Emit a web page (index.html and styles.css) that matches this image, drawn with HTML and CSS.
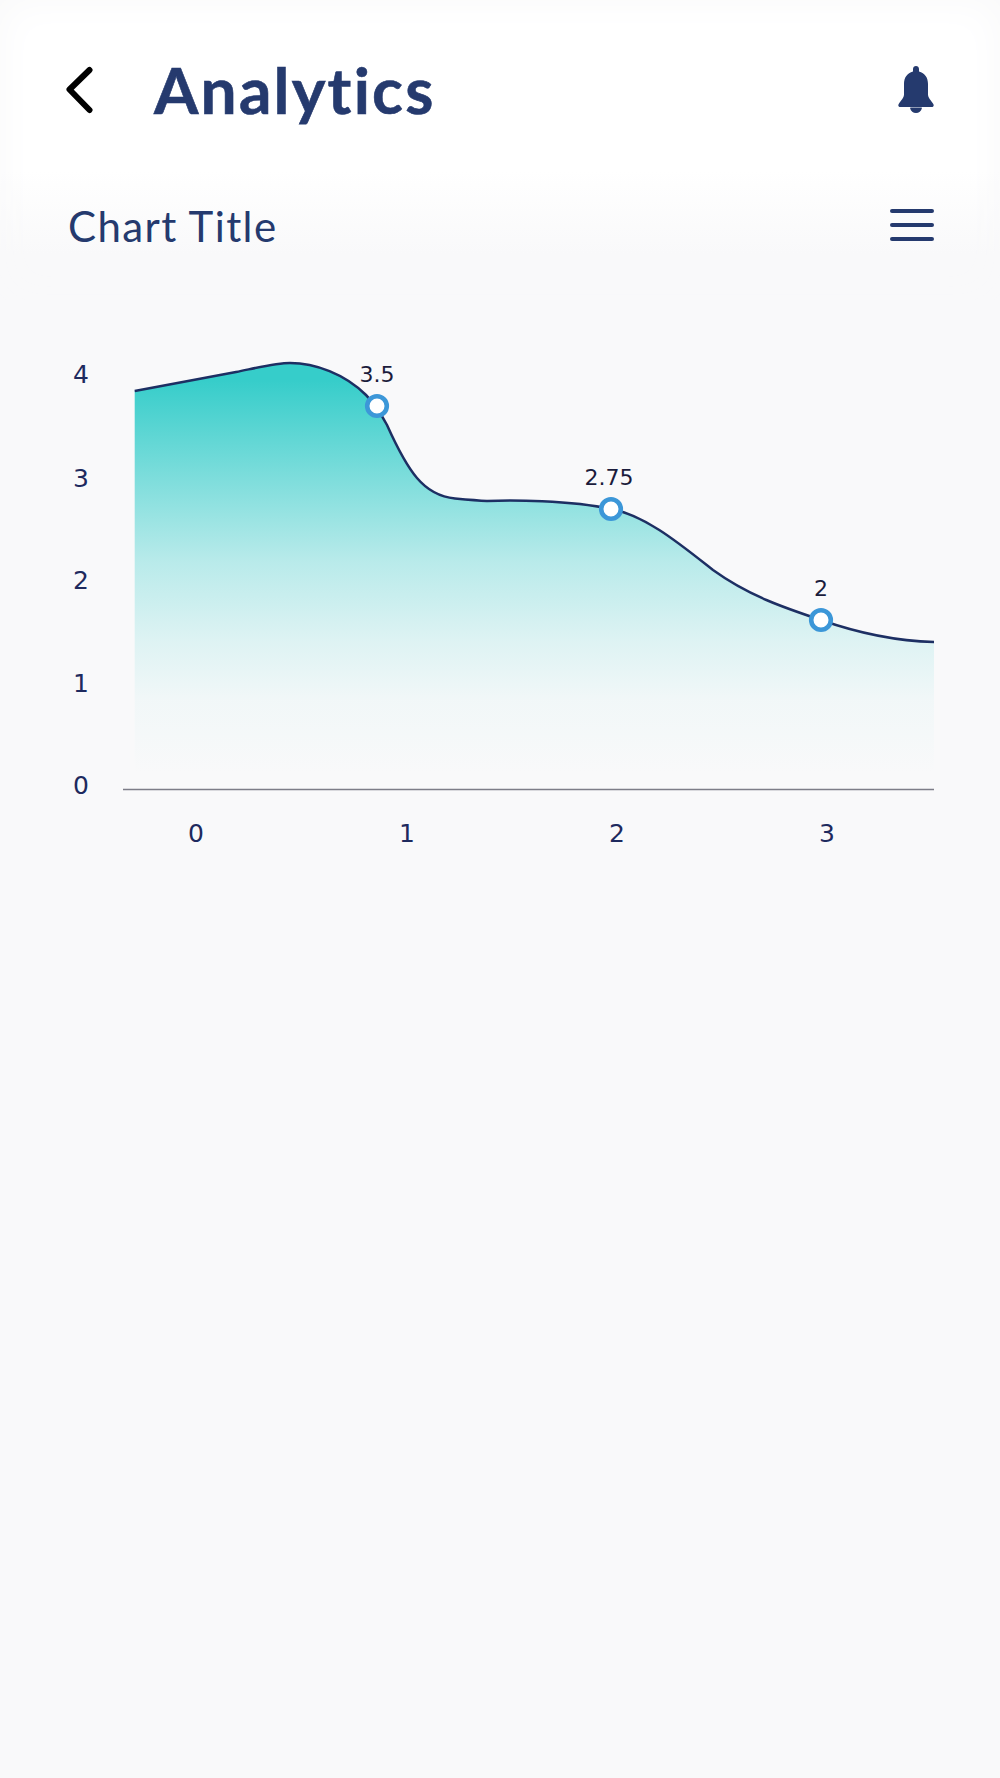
FILE: index.html
```html
<!DOCTYPE html>
<html lang="en">
<head>
<meta charset="utf-8">
<title>Analytics</title>
<link rel="stylesheet" href="styles.css">
</head>
<body>
<div class="top">
  <header class="header">
    <svg class="back" viewBox="0 0 28 48" width="28" height="48"><path d="M23.500 4 L3.500 23.500 L23.500 44" fill="none" stroke="#000" stroke-width="6" stroke-linecap="round" stroke-linejoin="round"/></svg>
    <h1 class="title">Analytics</h1>
    <svg class="bell" viewBox="0 0 36 48" width="36" height="48"><path d="M18 0c1.700 0 3 1.300 3 3v2.600c5.800 1.400 9 6.200 9 12.400v10.500c0 3 2.700 5.600 5.300 9.400.9 1.400.2 3.100-1.600 3.100H2.300c-1.800 0-2.500-1.700-1.600-3.100C3.300 34.100 6 31.500 6 28.500V18c0-6.200 3.200-11 9-12.400V3c0-1.700 1.300-3 3-3z" fill="#253a6e"/><path d="M12.600 41.500h10.800c.4 0 .6.300.5.700-.7 2.800-3 4.800-5.900 4.800s-5.200-2-5.900-4.800c-.1-.4.100-.7.500-.7z" fill="#253a6e"/></svg>
  </header>
  <div class="chart-head">
    <h2 class="chart-title">Chart Title</h2>
    <div class="burger"><span></span><span></span><span></span></div>
  </div>
</div>
<main class="chart-wrap">
  <svg class="chart" viewBox="0 340 1000 520" width="1000" height="520">
    <defs>
      <linearGradient id="area" gradientUnits="userSpaceOnUse" x1="0" y1="380" x2="0" y2="775">
        <stop offset="0" stop-color="#36cdca"/>
        <stop offset="0.19" stop-color="#36cdca" stop-opacity="0.72"/>
        <stop offset="0.32" stop-color="#36cdca" stop-opacity="0.53"/>
        <stop offset="0.46" stop-color="#36cdca" stop-opacity="0.33"/>
        <stop offset="0.66" stop-color="#36cdca" stop-opacity="0.14"/>
        <stop offset="0.81" stop-color="#36cdca" stop-opacity="0.04"/>
        <stop offset="1" stop-color="#36cdca" stop-opacity="0"/>
      </linearGradient>
    </defs>
    <path fill="url(#area)" d="M134.700 391 L236 372 C256 368 276 363 290 363 C315 363 345 374 366 395 C374 403 380 412 387 425 C396 445 405 464 417 478 C428 491 440 497 455 498.500 C466 499.500 477 500.500 487 501 C510 500 570 500 611 509 C645 515 680 544 713 570 C749 596 785 608 821 620 C858 633 896 641 934 642 L934 789 L134.700 789 Z"/>
    <path fill="none" stroke="#1d2f63" stroke-width="2.500" d="M134.700 391 L236 372 C256 368 276 363 290 363 C315 363 345 374 366 395 C374 403 380 412 387 425 C396 445 405 464 417 478 C428 491 440 497 455 498.500 C466 499.500 477 500.500 487 501 C510 500 570 500 611 509 C645 515 680 544 713 570 C749 596 785 608 821 620 C858 633 896 641 934 642"/>
    <line x1="123" y1="789.500" x2="934" y2="789.500" stroke="#7d7d88" stroke-width="1.400"/>
    <circle class="dot" cx="377" cy="406" r="9.800"/>
    <circle class="dot" cx="611" cy="509" r="9.800"/>
    <circle class="dot" cx="821" cy="620" r="9.800"/>
    <g class="value">
      <text x="377" y="382">3.5</text>
      <text x="609" y="485">2.75</text>
      <text x="821" y="596">2</text>
    </g>
    <g class="tick">
      <text x="81" y="383">4</text>
      <text x="81" y="487">3</text>
      <text x="81" y="589">2</text>
      <text x="81" y="692">1</text>
      <text x="81" y="794">0</text>
      <text x="196" y="842">0</text>
      <text x="407" y="842">1</text>
      <text x="617" y="842">2</text>
      <text x="827" y="842">3</text>
    </g>
  </svg>
</main>
</body>
</html>
```

FILE: styles.css
```css
* { box-sizing: border-box; }
html, body { margin: 0; padding: 0; }
body {
  width: 1000px;
  height: 1778px;
  overflow: hidden;
  background: #f9f9fa;
  font-family: "Lato", "Liberation Sans", sans-serif;
  color: #253a6e;
}
.top {
  height: 300px;
  padding: 60px 66px 0 66px;
  background: linear-gradient(to bottom, #fff 0, #fff 170px, #f9f9fa 255px);
  box-shadow: inset 0 0 40px 2px #f9f9fa;
}
.header {
  display: flex;
  align-items: center;
  height: 60px;
}
.back { flex: none; margin-right: 60px; }
.title {
  flex: 1;
  margin: 0;
  font-size: 64px;
  line-height: 60px;
  font-weight: 700;
  letter-spacing: 2.2px;
  font-variant-ligatures: none;
  -webkit-text-stroke: 0.6px #253a6e;
}
.bell { flex: none; }
.chart-head {
  display: flex;
  align-items: center;
  justify-content: space-between;
  margin-top: 80px;
  padding-left: 2px;
}
.chart-title {
  margin: 1px 0 -1px;
  font-size: 42px;
  line-height: 50px;
  font-weight: 400;
  letter-spacing: 1.4px;
  font-variant-ligatures: none;
}
.burger {
  display: flex;
  flex-direction: column;
  gap: 10px;
  width: 44px;
}
.burger span {
  display: block;
  height: 4px;
  border-radius: 2px;
  background: #253a6e;
}
.chart-wrap { margin-top: 40px; }
.chart { display: block; }
.dot { fill: #fff; stroke: #3c97d8; stroke-width: 4.6; }
.value text {
  font-family: "DejaVu Sans", sans-serif;
  font-size: 22px;
  fill: #1b1c3c;
  text-anchor: middle;
}
.tick text {
  font-family: "DejaVu Sans", sans-serif;
  font-size: 25px;
  fill: #1e2a5e;
  text-anchor: middle;
}
```
